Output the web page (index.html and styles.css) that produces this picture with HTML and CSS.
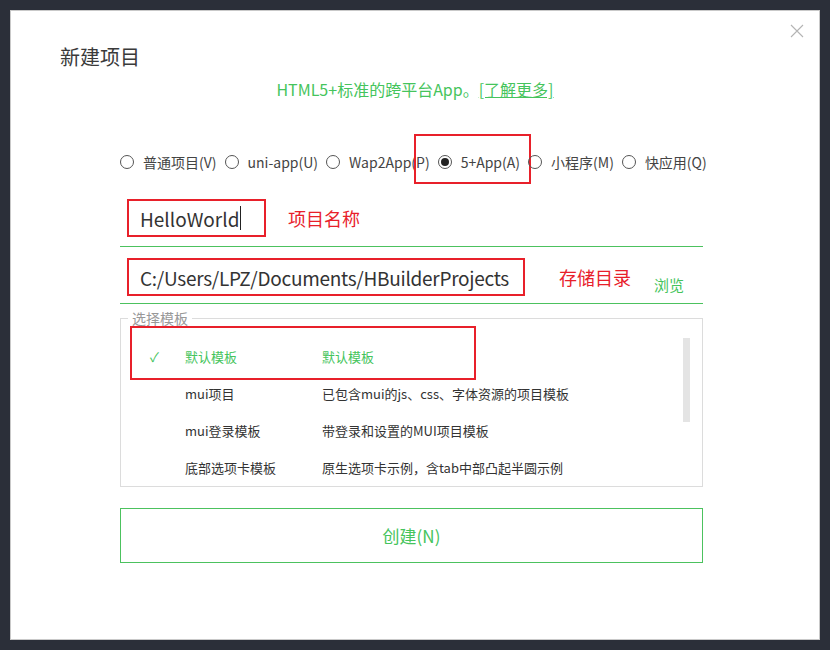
FILE: index.html
```html
<!DOCTYPE html>
<html lang="zh-CN">
<head>
<meta charset="utf-8">
<title>新建项目</title>
<link rel="stylesheet" href="styles.css">
</head>
<body>
<div class="dialog">
  <button class="close" aria-label="关闭">
    <svg width="14" height="14" viewBox="0 0 14 14"><path d="M1 1L13 13M13 1L1 13" stroke="#b4b4b4" stroke-width="1.1" fill="none"/></svg>
  </button>
  <h1 class="title">新建项目</h1>
  <p class="subtitle">HTML5+标准的跨平台App。<a class="more">[了解更多]</a></p>
  <div class="body">
    <div class="types">
      <label class="type"><span class="radio"></span>普通项目(V)</label>
      <label class="type"><span class="radio"></span>uni-app(U)</label>
      <label class="type"><span class="radio"></span>Wap2App(P)</label>
      <label class="type selected"><span class="radio"></span>5+App(A)<span class="mark-box type-mark"></span></label>
      <label class="type"><span class="radio"></span>小程序(M)</label>
      <label class="type"><span class="radio"></span>快应用(Q)</label>
    </div>
    <div class="field name-field">
      <span class="value mark">HelloWorld<span class="caret"></span></span>
      <span class="note">项目名称</span>
    </div>
    <div class="field path-field">
      <span class="value mark path">C:/Users/LPZ/Documents/HBuilderProjects</span>
      <span class="note">存储目录</span>
      <a class="browse">浏览</a>
    </div>
    <fieldset class="templates">
      <legend>选择模板</legend>
      <div class="list">
        <div class="row active">
          <span class="check">✓</span><span class="name">默认模板</span><span class="desc">默认模板</span>
          <span class="mark-box row-mark"></span>
        </div>
        <div class="row"><span class="check"></span><span class="name">mui项目</span><span class="desc">已包含mui的js、css、字体资源的项目模板</span></div>
        <div class="row"><span class="check"></span><span class="name">mui登录模板</span><span class="desc">带登录和设置的MUI项目模板</span></div>
        <div class="row"><span class="check"></span><span class="name">底部选项卡模板</span><span class="desc">原生选项卡示例，含tab中部凸起半圆示例</span></div>
        <div class="scrollbar"></div>
      </div>
    </fieldset>
    <button class="create">创建(N)</button>
  </div>
</div>
</body>
</html>
```

FILE: styles.css
```css
* { box-sizing: border-box; }
html, body { margin: 0; padding: 0; }
body {
  background: #2b2f39;
  width: 830px;
  height: 650px;
  overflow: hidden;
  padding: 10px;
  font-family: "Noto Sans CJK SC", sans-serif;
  color: #333;
}
.dialog {
  position: relative;
  width: 810px;
  height: 630px;
  background: #fff;
  border: 1px solid #c9c9c9;
  padding-top: 32px;
}
.close {
  position: absolute;
  right: 15px;
  top: 13px;
  width: 14px;
  height: 14px;
  padding: 0;
  border: 0;
  background: none;
  display: flex;
}
.title {
  margin: 0 0 0 49px;
  font-size: 20px;
  line-height: 28px;
  font-weight: normal;
  color: #3a3a3a;
}
.subtitle {
  margin: 6px 0 0;
  text-align: center;
  font-size: 16px;
  line-height: 24px;
  color: #45c45c;
}
.more { text-decoration: underline; color: #45c45c; }
.body {
  margin-left: 109px;
  width: 583px;
}
.types {
  margin-top: 51px;
  display: flex;
  align-items: center;
  height: 20px;
  gap: 8px;
  font-size: 14px;
}
.type {
  position: relative;
  display: flex;
  align-items: center;
  gap: 9px;
  white-space: nowrap;
  color: #444;
}
.radio {
  width: 14px;
  height: 14px;
  border: 1px solid #555;
  border-radius: 50%;
  display: flex;
  align-items: center;
  justify-content: center;
}
.selected .radio::after {
  content: "";
  width: 8px;
  height: 8px;
  border-radius: 50%;
  background: #222;
}
.mark-box {
  position: absolute;
  border: 2px solid #e8202a;
  pointer-events: none;
}
.type-mark { left: -24px; right: -11px; top: -18px; bottom: -12px; }
.field {
  display: flex;
  align-items: center;
  border-bottom: 1px solid #4cc25e;
  font-size: 19px;
}
.name-field { margin-top: 18px; height: 57px; }
.path-field { height: 57px; padding-top: 4px; }
.value {
  margin-left: 7px;
  height: 38px;
  display: flex;
  align-items: center;
  padding: 0 12px 0 11px;
  border: 2px solid #e8202a;
  color: #333;
}
.name-field .value { width: 139px; }
.path { letter-spacing: -0.28px; padding-right: 14px; }
.caret {
  display: inline-block;
  width: 1px;
  height: 24px;
  background: #222;
  margin-left: 1px;
}
.note { color: #e8202a; font-size: 18px; }
.name-field .note { margin-left: 22px; }
.path-field .note { margin-left: 34px; }
.browse { margin-left: 23px; font-size: 15px; color: #45c45c; padding-top: 14px; }
.templates {
  margin: 5px 0 0;
  padding: 11px 0 0;
  border: 1px solid #dcdcdc;
  height: 178px;
  min-width: 0;
}
.templates legend {
  margin-left: 7px;
  padding: 0 4px;
  font-size: 14px;
  line-height: 18px;
  color: #999;
}
.list {
  position: relative;
  height: 148px;
}
.row {
  position: relative;
  display: grid;
  grid-template-columns: 64px 137px 1fr;
  align-items: center;
  height: 37px;
  font-size: 13px;
  color: #333;
}
.check { padding-left: 29px; color: #45c45c; font-size: 13px; }
.active .name, .active .desc { color: #45c45c; }
.row-mark { left: 9px; width: 346px; top: -12px; bottom: -5px; }
.scrollbar {
  position: absolute;
  right: 12px;
  top: 0;
  width: 7px;
  height: 84px;
  background: #e4e4e4;
}
.create {
  display: block;
  margin-top: 21px;
  width: 583px;
  height: 55px;
  background: #fff;
  border: 1px solid #4cc25e;
  color: #45c45c;
  font-family: inherit;
  font-size: 17px;
}
```
